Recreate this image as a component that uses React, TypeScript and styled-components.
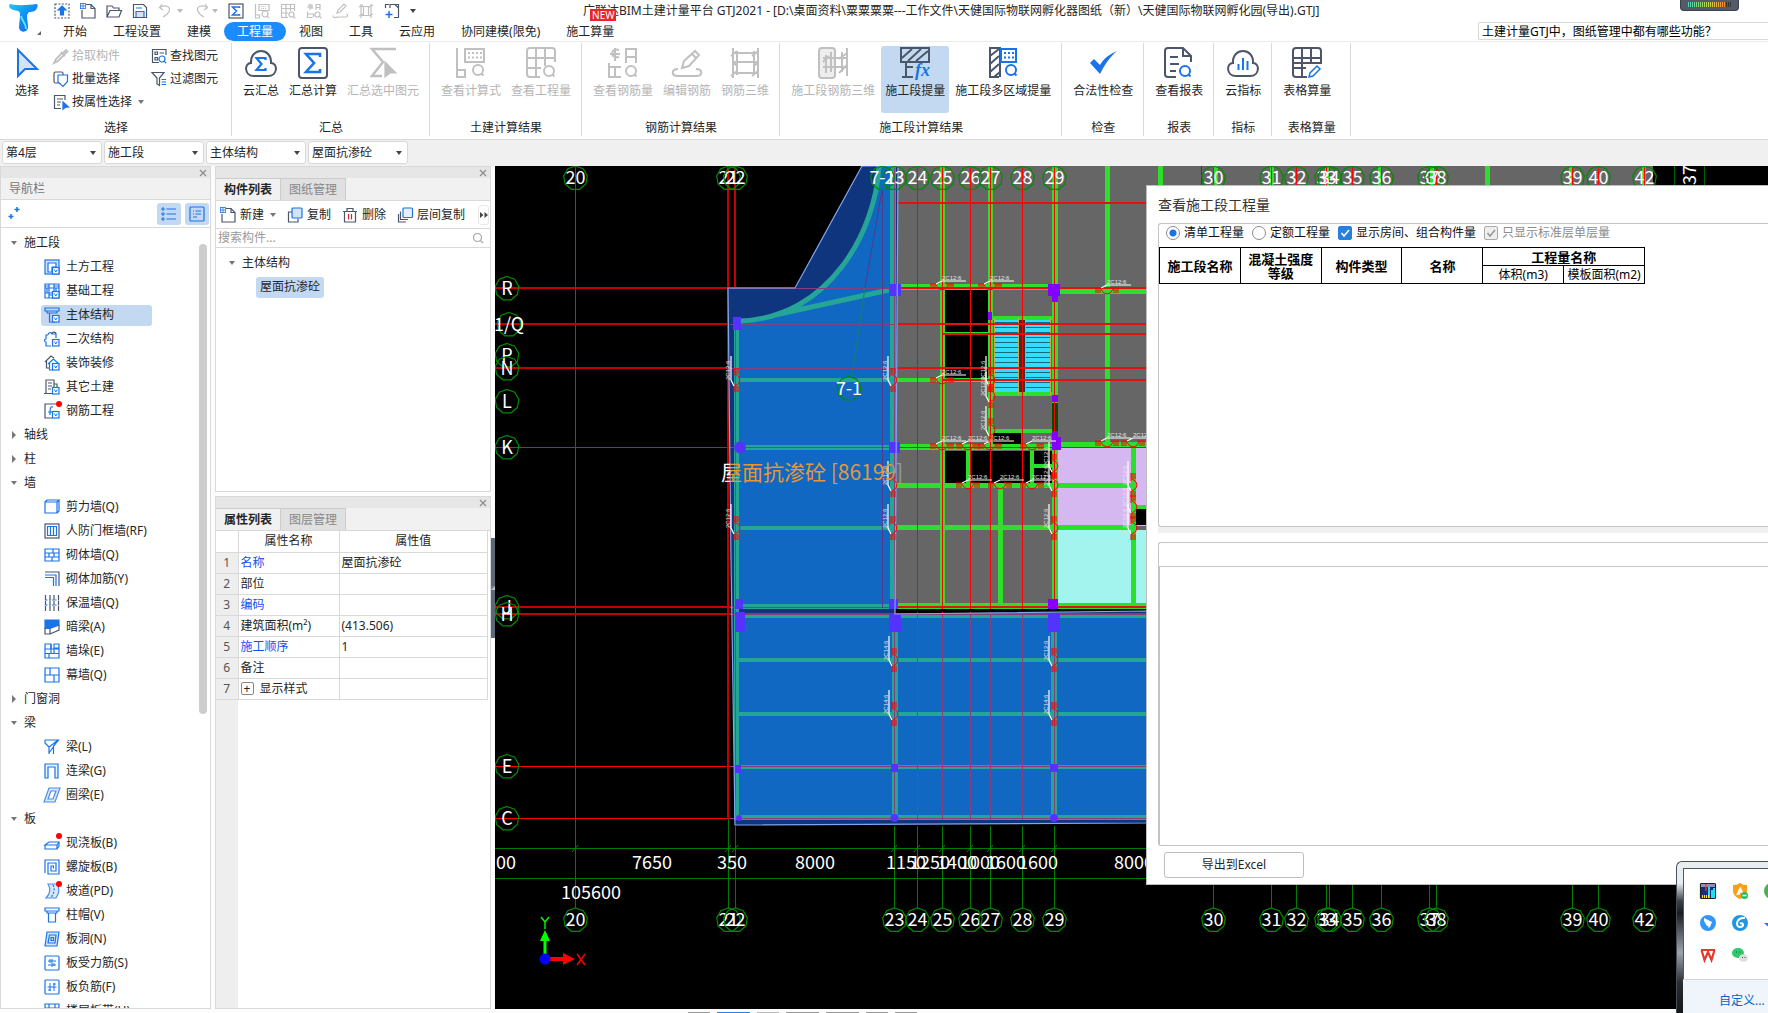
import React from 'react';
import styled, { createGlobalStyle } from 'styled-components';

const BLUE = '#1a73e8';
const DARK = '#4c566a';
const GRAY = '#c0c0c0';
const PALE = '#d3e4f9';
const SELECTED = '#c3d9f1';
const LINE = '#d9d9d9';

const GlobalStyle = createGlobalStyle`
  * { box-sizing: border-box; }
  body { margin: 0; background: #fcfcfc; overflow: hidden; }
  body, button, input, select, table {
    font-family: "Noto Sans", "Noto Sans CJK SC", sans-serif;
    font-size: 12px;
    line-height: 16px;
    color: #262626;
  }
  button { border: 0; padding: 0; background: none; white-space: nowrap; }
  ul { list-style: none; margin: 0; padding: 0; }
`;

/* ---------- icons ---------- */

const Svg = styled.svg<{ $size?: number }>`
  width: ${p => p.$size ?? 16}px;
  height: ${p => p.$size ?? 16}px;
  flex: none;
  fill: none;
  stroke: ${BLUE};
  stroke-width: 1.2;
  overflow: visible;
`;

type Art = Record<string, React.ReactNode>;

const Lens = ({ x, y, c, r = 3 }: { x: number; y: number; c: string; r?: number }) => (
  <g stroke={c}><circle cx={x} cy={y} r={r} fill="#fff" /><path d={`M${x + r * 0.7} ${y + r * 0.7}l2 2`} /></g>
);

const smallArt: Art = {
  upload: <><rect x="1" y="1" width="14" height="14" stroke={DARK} strokeDasharray="2 1.4" /><path d="M8 3l4 4H9.500v5h-3V7H4z" fill={BLUE} /></>,
  newFile: <><path d="M6 1.500h5l4 4v9.500H2V7M11 1.500v4h4" stroke={DARK} /><path d="M0 .5h5M0 3h5M0 5.500h5M.5 0v6M3 0v6M5.500 0v6" strokeWidth=".8" /></>,
  open: <><path d="M1 14V3h5l1.500 2H13v3M1 14L4 7.500h11.500L13 14z" stroke={DARK} /></>,
  save: <><path d="M1.500 1.500h10l3 3v10h-13z" stroke={DARK} /><path d="M4 5h6M4 14V8.500h8V14" fill={PALE} /></>,
  undo: <path d="M4 1L1.500 4.500 5 7M1.500 4.500C8 1 13 4 11 8.500 10 11 7 13 5 14" stroke={GRAY} />,
  redo: <path d="M12 1l2.500 3.500L11 7M14.500 4.500C8 1 3 4 5 8.500 6 11 9 13 11 14" stroke={GRAY} />,
  sigma: <><rect x="1" y="1" width="14" height="14" stroke={DARK} /><path d="M11.500 5V4h-7l4 4-4 4h7v-1" strokeWidth="1.500" /></>,
  viewCalc: <g stroke={GRAY}><path d="M1.500 1v14h4v-3h-4M5 1.500h10v6H5z" /><path d="M7 3.500h6M7 5.500h6" strokeDasharray="1 1" /><Lens x={11} y={11} c={GRAY} /></g>,
  viewQty: <g stroke={GRAY}><path d="M8 14.500H1.500v-13h13V8M1.500 5.500h13M1.500 10H8M6 1.500v13M10.500 1.500V8" /><Lens x={11.500} y={11.500} c={GRAY} r={2.500} /></g>,
  viewBar: <g stroke={GRAY}><path d="M4 1v6M1 4h6M2 2h4v4M10 7V1.500h4V7M10 4.500h4M1.500 8.500v6h5M1.500 11h6v3" /><Lens x={11.500} y={11.500} c={GRAY} r={2.500} /></g>,
  editBar: <g stroke={GRAY}><path d="M5 10l1-3 6-6 2 2-6 6zM1 12.500c0 3 3 2 5 1.500h8c2 0 2-3 0-3" /></g>,
  bar3d: <g stroke={GRAY}><path d="M3 1v14M13 1v14M3 3.500h10M3 12.500h10M1 4l4-2M1 13l4-2M11 4l4-2M11 13l4-2M5.500 3v10M10.500 3v10" /></g>,
  addSel: <><path d="M5 1.500H1.500V5M10 1.500h4.500v13H10M6 5V1.500h5l3.500 3.500" stroke={DARK} /><path d="M5 8v7M1.500 11.500h7" strokeWidth="1.500" /></>,
  pick: <><path d="M1 15l2-4 6-6 2 2-6 6zM8 4l4 4M9.500 5.500L13 2l1.500 1.500-3.500 3.500" stroke={GRAY} strokeWidth="1.800" /></>,
  batch: <><rect x="1" y="1" width="9" height="11" rx="1.500" stroke={DARK} /><path d="M5 4h9.500v6.500L10 15.500 5 11z" fill="#fff" /></>,
  byAttr: <><path d="M12 6V1.500H1.500v13H8M4 5h6M4 8h4M4 11h3" stroke={DARK} /><path d="M10 8l5.500 5-3 .2-2.500 2z" fill={BLUE} /></>,
  find: <><path d="M15 7V1.500H1.500v13H8M8.500 5H13" stroke={DARK} /><path d="M4 4h2.500v2.500H4zM4 9.500h2.500V12H4z" stroke={DARK} /><Lens x={11} y={11} c={BLUE} /></>,
  filter: <><path d="M1 1.500h12L8.500 7v7.500L6 13V7z" stroke={DARK} /><path d="M10.500 8.500H15M10.500 11H15M10.500 13.500H15" /></>,
  copy: <><path d="M5 5H1.500v10H11v-3.500" stroke={DARK} /><rect x="5" y="1" width="10" height="10" rx="1" fill={PALE} /></>,
  remove: <><path d="M2.500 4.500V15h11V4.500M1 4.500h14M5 4.500V1.500h6v3" stroke={DARK} /><path d="M6.500 7v5.500M9.500 7v5.500" stroke="#e02020" /></>,
  layerCopy: <><path d="M1.500 7v8H9M3.500 4.500v8H11" stroke={DARK} /><rect x="6" y="1" width="9.500" height="9.500" rx="1" fill="#e6f0fc" /></>,
  list: <><path d="M5.500 3H15M5.500 8H15M5.500 13H15" /><path d="M1 2h2v2H1zM1 7h2v2H1zM1 12h2v2H1z" strokeWidth="1" /></>,
  card: <><rect x="1" y="1" width="14" height="14" rx="1" /><path d="M4 5h1M6.500 5H12M4 8h1M6.500 8H12M4 11h4" /></>,
  plus: <><path d="M9 1v5M6.500 3.500h5M3 8v5M.5 10.500h5" strokeWidth="1.500" /></>,
};

const tagM = <><rect x="8.500" y="8.500" width="6.500" height="6.500" fill="#fff" stroke={BLUE} /><path d="M10.300 10.500l1.500 2.500 1.500-2.500" strokeWidth="1" /></>;
const redDot = <circle cx="15" cy="1" r="3" fill="#f00" stroke="none" />;

const navArt: Art = {
  earth: <><rect x="1" y="1" width="14" height="14" fill={PALE} /><path d="M4 4h8v4H8v5H4z" fill="#fff" />{tagM}</>,
  base: <><path d="M1 1h14v14H1zM1 5h14M1 10h14M5 1v14M10 1v14M1 3h4M10 3h5M3 5v5M12 5v5M5 12h5" />{tagM}</>,
  main: <><path d="M1 1h14v3H1zM3 4v2h2.500v9H11M5.500 6H13V4" />{tagM}</>,
  second: <><path d="M4 4c0-3 4-3 4-1h4v4M4 4H2v4c-2 0-2 3 0 3v4h5" /><path d="M8 3c0-3 4-2 4 0" stroke={DARK} />{tagM}</>,
  decor: <><path d="M1 7l6-6 3 2M2.500 6v7H5" stroke={DARK} /><path d="M4 9l5.500-5L15 9M5.500 8v7H9" />{tagM}</>,
  other: <><path d="M2 14V1h8v7M0 14.500h8M10 5h3v3M4 4h4M4 7h4M4 10h3" stroke={DARK} />{tagM}</>,
  rebar: <><path d="M12 1H1v14h7" stroke={DARK} /><path d="M9 4c-3-1-3 2-3 8M4 9h5" />{tagM}{redDot}</>,
  shear: <><path d="M1 3h12v11H1zM1 3l2-2h12l-2 2M15 1v11l-2 2" /></>,
  door: <><rect x="1" y="1" width="14" height="14" stroke={DARK} /><path d="M3.500 3.500h9v9h-9zM6.500 3.500v9M9.500 3.500v9" /></>,
  brick: <path d="M1 2h14v12H1zM1 6h14M1 10h14M9 2v4M5 6v4M10 6v4M8 10v4" />,
  brickbar: <><path d="M1 1h14v14" stroke={DARK} /><path d="M1 4h11v11M1 6.500h8.500V15" /></>,
  insul: <><path d="M1.500 0v16M6 0v16M10 0v16M14.500 0v16" stroke={DARK} strokeDasharray="5 .5" /><path d="M2 5h12M2 10h12" strokeDasharray="1.500 1.500" /></>,
  hidden: <><path d="M1 1h14v5L6 9.500H1z" fill={BLUE} /><path d="M1 9v6h5V9.500M6 15l9-4V6" stroke={DARK} /></>,
  pier: <><path d="M1 1h6v5H1zM10 1h5v4h-5zM1 6h14v9H1zM1 10.500h14M5 10.500V15M10 6v4.500" /><path d="M7 1v9" /></>,
  curtain: <path d="M1 1h14v14H1zM1 8h14M6 1v7M10 8v7" />,
  beam: <path d="M1 1h13.500L9.500 7v8M1 1v3l4 4v7M5 8l4-3 5-4M5 14l5-7" />,
  link: <path d="M1 15V1h13v14h-3V4H4v11z" fill="#eaf2fd" />,
  ring: <path d="M5 1h11l-5 14H0zM7 4h5l-3 8H4z" fill="#d9e7fa" fillRule="evenodd" stroke="#4c8ee6" />,
  slab: <><path d="M1 10l4-3h10l-2 3zM1 10v4h12v-4M13 14l2-3V7" />{redDot}</>,
  spiral: <path d="M1 14V1h14v14H4V4h8v8H7V7h2.500v2.500" />,
  ramp: <><path d="M4 1h9c4 6 1 11-1 14H2C7 10 7 6 4 1z" fill="#d9e7fa" stroke="#4c8ee6" /><path d="M9 2c2 4 1 9-2 12" strokeDasharray="2 1.500" />{redDot}</>,
  cap: <path d="M1 1h14v3H1zM3 4v2h10V4M4.500 6v9h7V6" />,
  hole: <><path d="M3 1h12l-2 14H1z" fill={PALE} /><path d="M5.500 4h6.500l-1 8H4zM7 6.500h2.500v3H7z" /></>,
  force: <><rect x="1" y="1" width="14" height="14" rx="1" /><path d="M4 6h8M4 10h8M8 4v8M6 4v4M10 8v3" strokeWidth="1" /></>,
  neg: <><rect x="1" y="1" width="14" height="14" rx="1" /><path d="M3.500 8h9M6 4v8M10 4v8M4 11h3M9 5h3" strokeWidth="1" /></>,
  strip: <path d="M1 1h14v14H1zM5 1v14M11 1v14M1 5h14" />,
};

const hatch = 'M3 11L13 2M9 14L22 2M17 14L29 4';

const bigArt: Art = {
  cursor: <path d="M7 3v26l7-7h12z" fill={PALE} strokeWidth="2" />,
  cloudSum: <><path d="M9 29C-1 29-1 16 6 16 5 0 27 0 26 16c7 0 7 13-3 13z" stroke={DARK} strokeWidth="2" /><path d="M20.500 13v-2h-9l5 6-5 6h9v-2" strokeWidth="2.200" /></>,
  sum: <><rect x="2" y="1" width="28" height="30" rx="3" stroke={DARK} strokeWidth="2" /><path d="M23 10V7H9l8 9-8 9h14v-3" strokeWidth="2.600" /></>,
  sumSel: <g stroke={GRAY}><path d="M29 2H5l11 13L5 29h10" strokeWidth="2.500" /><path d="M18 15l11 11h-6l-5 4z" fill={GRAY} /></g>,
  calc: <g stroke={GRAY} strokeWidth="2"><path d="M2 1v29h8v-7H2M10 2h19v13H10z" /><path d="M13 6h14M13 10.500h14" strokeDasharray="2 2" /><Lens x={23} y={23} c={GRAY} r={5} /></g>,
  qty: <g stroke={GRAY} strokeWidth="2"><path d="M15 30H5q-3 0-3-3V4q0-3 3-3h22q3 0 3 3v11M2 11h28M2 21h14M11 1v29M20 1v18" /><Lens x={24} y={24} c={GRAY} r={5} /></g>,
  barQty: <g stroke={GRAY} strokeWidth="2"><path d="M12 3C3 0 3 12 12 10M8 1v13M3 7h10M19 16V2h10v14M19 10h10M2 16v14h12M2 20h12M8 20v10" /><Lens x={24} y={24} c={GRAY} r={5} /></g>,
  barEdit: <g stroke={GRAY} strokeWidth="2"><path d="M11 21l2-7L24 4l4 4-10 11zM21 7l4 4M7 22c-7 0-7 7 0 7h18c7 0 7-7 0-7" /></g>,
  bar3d: <g stroke={GRAY} strokeWidth="2"><path d="M4 1v30M29 1v30M4 6h25M4 15h25M4 26h25M8 4v24M25 4v24M2 9l6-5M2 29l6-5M23 9l6-5M23 29l6-5M4 15l4 4M25 19l4-4" /></g>,
  stage3d: <g stroke={GRAY} strokeWidth="2"><rect x="2" y="1" width="16" height="30" rx="3" fill="#eee" /><path d="M9 8v18M30 1v28M6 11h24M6 20h24M14 5v20M25 5v20M6 15l6-6M22 26l8-8M22 12l8-6" /></g>,
  stage: <><path d="M2 1h28v14H2z" stroke={DARK} strokeWidth="2" /><path d={hatch} stroke={DARK} strokeWidth="2" /><path d="M7 15v15M3 30h11M7 20h7" stroke={DARK} strokeWidth="2" /><text x="16" y="29" fontSize="18" fontStyle="italic" fontWeight="bold" fontFamily="Liberation Serif, serif" fill={BLUE} stroke="none">fx</text></>,
  stageMulti: <><path d="M12 30H3V1h10v29M3 9l9-7M3 17l9-8M3 25l9-8M7 30l6-5" stroke={DARK} strokeWidth="2" /><path d="M14 2h15v13H14z" fill="#fff" strokeWidth="2" /><path d="M17 6h11M17 10.500h11" strokeWidth="2" strokeDasharray="2 2" /><g strokeWidth="2"><Lens x={24} y={23} c={BLUE} r={5} /></g></>,
  check: <path d="M3 16l4-4 6 6C17 11 23 7 30 4 23 10 18 17 13 27z" fill={BLUE} stroke="none" />,
  report: <><path d="M13 30H5q-3 0-3-3V4q0-3 3-3h15l8 8v6M20 1v8h8M7 10h8M7 17h9M7 24h6" stroke={DARK} strokeWidth="2" /><g strokeWidth="2"><Lens x={22} y={24} c={BLUE} r={5} /></g></>,
  cloudBar: <><path d="M9 29C-1 29-1 16 6 16 5 0 27 0 26 16c7 0 7 13-3 13z" stroke={DARK} strokeWidth="2" /><path d="M11.500 17v6M16 11v12M20.500 14v9" strokeWidth="2" /></>,
  tableCalc: <><path d="M16 30H5q-3 0-3-3V4q0-3 3-3h22q3 0 3 3v12H2M2 11h28M2 21h13M11 1v29M20 1v15" stroke={DARK} strokeWidth="2" /><path d="M18 30l1-4 7-7 3 3-7 7z" strokeWidth="1.500" fill="#fff" /></>,
};

const Caret = styled.i<{ $dir?: 'down' | 'right'; $c?: string }>`
  flex: none;
  width: 0;
  height: 0;
  border: 3px solid transparent;
  ${p => (p.$dir === 'right'
    ? `border-left: 4px solid ${p.$c ?? '#777'}; border-top-width: 4px; border-bottom-width: 4px; border-right: 0; margin: 0 1px;`
    : `border-top: 4px solid ${p.$c ?? '#777'}; border-bottom: 0;`)}
`;

/* ---------- header ---------- */

const Shell = styled.div`
  position: relative;
  display: flex;
  flex-direction: column;
  height: 100vh;
  overflow: hidden;
  background: #fcfcfc;
`;
const Header = styled.header`
  display: grid;
  grid-template-columns: 50px 1fr;
  background: #fff;
`;
const LogoButton = styled.button`
  display: flex;
  align-items: flex-start;
  padding: 4px 0 0 9px;
  ${Svg} { width: 32px; height: 32px; }
`;
const TitleRow = styled.div`
  display: flex;
  align-items: center;
  height: 22px;
  padding-left: 4px;
`;
const QuickBar = styled.div`
  display: flex;
  align-items: center;
  gap: 10px;
  width: 529px;
  button { display: flex; align-items: center; gap: 3px; }
`;
const Title = styled.h1`
  margin: 0;
  font-size: 12px;
  line-height: 16px;
  font-weight: 400;
  white-space: nowrap;
`;
const TabRow = styled.nav`
  display: flex;
  height: 19px;
`;
const Tab = styled.button<{ $active?: boolean }>`
  position: relative;
  padding: 0 13px;
  line-height: 19px;
  border-radius: 10px;
  color: ${p => (p.$active ? '#fff' : '#262626')};
  background: ${p => (p.$active ? '#1b8cff' : 'transparent')};
`;
const NewBadge = styled.span`
  position: absolute;
  top: -13px;
  right: 11px;
  width: 26px;
  background: #e8262a;
  color: #fff;
  font-size: 10px;
  line-height: 12px;
  text-align: center;
`;
const HelpInput = styled.input`
  width: 290px;
  height: 18px;
  margin-left: auto;
  padding: 0 3px;
  border: 1px solid ${LINE};
  border-right: 0;
  border-radius: 2px 0 0 2px;
  color: #000;
  background: #fff;
`;
const Meter = styled.div`
  position: absolute;
  top: 0;
  right: 29px;
  width: 59px;
  height: 11px;
  padding: 2px 7px 4px;
  border-radius: 0 0 4px 4px;
  background: #555a68;
  border: 1px solid #3c404b;
  border-top: 0;
  &::before {
    content: "";
    display: block;
    height: 5px;
    background: repeating-linear-gradient(90deg, transparent 0 1px, #555a68 1px 2px), linear-gradient(90deg, #3fd8b4, #c8d84a 50%, #f08a3c 85%, #333 86%);
  }
`;

const Ribbon = styled.div`
  display: flex;
  height: 99px;
  background: #fff;
  border-top: 1px solid #ececec;
  border-bottom: 1px solid ${LINE};
`;
const Group = styled.section<{ $width?: number }>`
  display: flex;
  flex-direction: column;
  flex: none;
  width: ${p => (p.$width ? `${p.$width}px` : 'auto')};
  margin: 1px 0 3px;
  padding: 1px 6px 0 7px;
  border-right: 1px solid ${LINE};
`;
const GroupBody = styled.div`
  display: flex;
  flex: 1;
  gap: 2px;
`;
const GroupLabel = styled.h2`
  margin: 0;
  font-size: 12px;
  line-height: 16px;
  font-weight: 400;
  text-align: center;
`;
const BigButton = styled.button<{ $on?: boolean }>`
  display: flex;
  flex-direction: column;
  align-items: center;
  gap: 4px;
  height: 67px;
  margin-top: 2px;
  padding: 1px 4px;
  border-radius: 3px;
  color: #262626;
  background: ${p => (p.$on ? SELECTED : 'transparent')};
  &:disabled { color: #b5b5b5; }
`;
const SmallGrid = styled.div`
  display: grid;
  grid-template-columns: 98px auto;
  grid-auto-rows: 23px;
  padding-left: 4px;
`;
const SmallButton = styled.button`
  display: flex;
  align-items: center;
  gap: 3px;
  color: #262626;
  &:disabled { color: #b5b5b5; }
  ${Caret} { margin-left: 3px; }
`;

const SelectRow = styled.div`
  display: flex;
  gap: 2px;
  height: 26px;
  padding: 1px 2px;
  background: #f0f0f0;
`;
const SelectBox = styled.label`
  position: relative;
  display: flex;
  width: 100px;
  height: 23px;
  select {
    appearance: none;
    width: 100%;
    padding: 0 3px;
    border: 1px solid ${LINE};
    border-radius: 3px;
    background: #fff;
  }
  ${Caret} { position: absolute; right: 6px; top: 10px; }
`;

/* ---------- docked panels ---------- */

const Main = styled.main`
  display: flex;
  flex: 1;
  min-height: 0;
`;
const Column = styled.div<{ $width: number }>`
  display: flex;
  flex-direction: column;
  gap: 4px;
  flex: none;
  width: ${p => p.$width}px;
  margin-right: 4px;
`;
const Panel = styled.section<{ $height?: number }>`
  display: flex;
  flex-direction: column;
  flex: ${p => (p.$height ? `0 0 ${p.$height}px` : '1 1 0')};
  min-height: 0;
  overflow: hidden;
  background: #fff;
  border: 1px solid ${LINE};
`;
const Grip = styled.div`
  display: flex;
  justify-content: flex-end;
  align-items: center;
  flex: none;
  height: 11px;
  padding-right: 3px;
  background: #e6e6e6;
  ${Svg} { stroke: #8c8c8c; display: block; }
`;
const PanelTitle = styled.div`
  flex: none;
  height: 22px;
  padding-left: 8px;
  line-height: 21px;
  color: #777;
  background: #f1f1f1;
  border-bottom: 1px solid ${LINE};
`;
const PanelTabs = styled.div`
  display: flex;
  flex: none;
  height: 23px;
  background: #f1f1f1;
  border-bottom: 1px solid ${LINE};
`;
const PanelTab = styled.button<{ $active?: boolean }>`
  width: 65px;
  border: 1px solid #ccc;
  border-width: 1px 1px 0 0;
  font-weight: ${p => (p.$active ? 700 : 400)};
  color: ${p => (p.$active ? '#262626' : '#888')};
  background: ${p => (p.$active ? '#f1f1f1' : '#e0e0e0')};
`;
const NavTools = styled.div`
  display: flex;
  align-items: center;
  gap: 4px;
  flex: none;
  height: 28px;
  padding: 0 1px 0 7px;
  border-bottom: 1px solid ${LINE};
  button { display: flex; }
`;
const ToggleButton = styled.button`
  justify-content: center;
  align-items: center;
  width: 24px;
  height: 22px;
  border-radius: 3px;
  background: ${SELECTED};
`;
const Spacer = styled.span`flex: 1;`;

const TreeArea = styled.div`
  position: relative;
  flex: 1;
  min-height: 0;
  overflow: hidden;
  padding-top: 3px;
`;
const ScrollThumb = styled.div`
  position: absolute;
  top: 16px;
  right: 3px;
  width: 8px;
  height: 470px;
  border-radius: 4px;
  background: #cdcdcd;
`;
const TreeItem = styled.li`
  display: flex;
  align-items: center;
  height: 24px;
`;
const Branch = styled.button<{ $indent?: number }>`
  display: flex;
  align-items: center;
  gap: 7px;
  margin-left: ${p => p.$indent ?? 10}px;
`;
const Leaf = styled.button<{ $on?: boolean }>`
  display: flex;
  align-items: center;
  gap: 6px;
  width: 111px;
  height: 21px;
  margin-left: 40px;
  padding-left: 3px;
  border-radius: 3px;
  background: ${p => (p.$on ? SELECTED : 'transparent')};
`;

const ToolRow = styled.div`
  display: flex;
  align-items: center;
  gap: 11px;
  flex: none;
  height: 28px;
  padding: 0 1px 0 4px;
  border-bottom: 1px solid ${LINE};
`;
const ToolButton = styled.button`
  display: flex;
  align-items: center;
  gap: 4px;
  ${Caret} { margin-left: 2px; }
`;
const MoreButton = styled.button`
  display: flex;
  align-items: center;
  justify-content: center;
  flex: none;
  width: 11px;
  height: 20px;
  margin-left: auto;
  border: 1px solid #e8e8e8;
  border-radius: 3px;
`;
const SearchRow = styled.label`
  display: flex;
  align-items: center;
  flex: none;
  height: 19px;
  padding: 0 7px 0 2px;
  border-bottom: 1px solid ${LINE};
  input { flex: 1; min-width: 0; border: 0; padding: 0; outline: 0; background: none; }
  input::placeholder { color: #999; }
  ${Svg} { stroke: #aaa; }
`;
const Chip = styled.button`
  height: 21px;
  margin-left: 40px;
  padding: 0 4px;
  border-radius: 3px;
  background: ${SELECTED};
`;

const PropArea = styled.div`
  flex: 1;
  background: linear-gradient(90deg, #eee 22px, #fff 22px);
`;
const PropTable = styled.table`
  width: calc(100% - 2px);
  table-layout: fixed;
  border-collapse: collapse;
  th, td { height: 21px; padding: 0 2px; border: 1px solid ${LINE}; font-weight: 400; text-align: left; line-height: 16px; }
  thead th { text-align: center; background: #fff; border-top: 0; }
  tr > :first-child { border-left: 0; text-align: center; color: #555; }
  tbody td { background: #fff; }
`;
const PropName = styled.span<{ $link?: boolean }>`
  color: ${p => (p.$link ? '#1450f5' : '#262626')};
`;
const Expand = styled.button`
  width: 13px;
  height: 13px;
  margin: 0 6px 0 0;
  border: 1px solid #888;
  border-radius: 2px;
  line-height: 11px;
  font-size: 12px;
`;

const Splitter = styled.div`
  display: flex;
  align-items: center;
  flex: none;
  width: 4px;
  margin-left: -4px;
  height: 100px;
  margin-top: 372px;
  background: #5b6875;
  ${Caret} { border-left: 0; border-right: 4px solid #b8c0c8; border-top-width: 4px; border-bottom-width: 4px; margin: 0; }
`;

/* ---------- viewport ---------- */

const Viewport = styled.div`
  position: relative;
  flex: 1;
  min-width: 0;
  overflow: hidden;
  background: #000;
`;
const Drawing = styled.svg`
  display: block;
  width: 1273px;
  height: 843px;
  font-family: "Noto Sans CJK SC", sans-serif;
`;

const octagon = (cx: number, cy: number) =>
  Array.from({ length: 9 }, (_, i) => {
    const a = (i / 9) * Math.PI * 2 - Math.PI / 2;
    return `${(cx + Math.cos(a) * 12).toFixed(1)},${(cy + Math.sin(a) * 12).toFixed(1)}`;
  }).join(' ');

const Bubble = ({ x, y, t }: { x: number; y: number; t: string }) => (
  <g>
    <polygon points={octagon(x, y)} fill="none" stroke="#008c00" strokeWidth="1.2" />
    <text x={x} y={y + 6} fontSize="18" fill="#fff" textAnchor="middle">{t}</text>
  </g>
);

const Rebar = ({ x, y, v, t = '2C12;6' }: { x: number; y: number; v?: boolean; t?: string }) => (
  <g transform={`translate(${x} ${y})${v ? ' rotate(-90)' : ''}`} fill="none">
    <path d="M-12-2h8M4-2h8M-11-2v5M-9-2v5M-7-2v5M11-2v5M9-2v5M7-2v5M-6-1Q-4 4 0 4T6-1" stroke="#f00" />
    <path d="M-6-2L0-5H24" stroke="#fff" strokeWidth="1.200" />
    <text x="0" y="-6.500" fontSize="6" fill="#e8e8e8" fontFamily="Liberation Sans, sans-serif">{t}</text>
  </g>
);

type Seg = [number, number, number, number, number];
const Lines = ({ d, c }: { d: Seg[]; c: string }) => (
  <g stroke={c} shapeRendering="crispEdges">
    {d.map(([x1, y1, x2, y2, w], i) => <line key={i} x1={x1} y1={y1} x2={x2} y2={y2} strokeWidth={w} />)}
  </g>
);
type Box = [number, number, number, number];
const Boxes = ({ d, c }: { d: Box[]; c: string }) => (
  <g fill={c} shapeRendering="crispEdges">
    {d.map(([x, y, w, h], i) => <rect key={i} x={x} y={y} width={w} height={h} />)}
  </g>
);

const axes: [number, string][] = [
  [575, '20'], [728, '21'], [735, '22'], [894, '23'], [917, '24'], [942, '25'], [970, '26'], [990, '27'], [1022, '28'], [1054, '29'],
  [1213, '30'], [1271, '31'], [1296, '32'], [1326, '33'], [1329, '34'], [1352, '35'], [1381, '36'], [1429, '37'], [1436, '38'],
  [1572, '39'], [1598, '40'], [1644, '42'],
];
const rows: [number, string, number][] = [
  [288, 'R', 2], [324, '1/Q', 2], [355, 'P', 0], [368, 'N', 2], [401, 'L', 0], [447, 'K', 1],
  [607, 'J', 2], [614, 'H', 2], [766, 'E', 1], [818, 'C', 1],
];
const dims: [number, number, string][] = [
  [506, 863, '00'], [652, 863, '7650'], [732, 863, '350'], [815, 863, '8000'], [906, 863, '1150'], [930, 863, '1250'],
  [957, 863, '1400'], [980, 863, '1000'], [1006, 863, '1600'], [1038, 863, '1600'], [1134, 863, '8000'], [591, 893, '105600'],
];

const steps = Array.from({ length: 15 }, (_, i) => 322 + i * 5);
const outline = '728,288 795,288 862,166 898,166 896,480 895,614 1148,611 1148,823 735,825 731,560';

const Plan = () => (
  <Drawing viewBox="495 166 1273 843" role="img" aria-label="施工段平面图">
    <defs>
      <linearGradient id="label" gradientUnits="userSpaceOnUse" x1="721" x2="904" y1="0" y2="0">
        <stop offset="0.05" stopColor="#fff" /><stop offset="0.05" stopColor="#e8963a" />
        <stop offset="0.93" stopColor="#e8963a" /><stop offset="0.93" stopColor="#9a9a9a" />
      </linearGradient>
    </defs>
    <Boxes c="#666" d={[[896, 166, 757, 442]]} />
    <Boxes c="#d5b8f0" d={[[1058, 448, 90, 78]]} />
    <Boxes c="#a3f3ee" d={[[1058, 530, 90, 75]]} />
    <Boxes c="#000" d={[[944, 290, 44, 42], [944, 335, 44, 43], [992, 433, 29, 11], [944, 451, 22, 32], [971, 451, 59, 32], [1034, 451, 18, 13], [1034, 468, 18, 15], [1136, 509, 12, 16]]} />
    <Lines c="#2bdf2b" d={[
      [942.5, 166, 942.5, 605, 5], [990.5, 166, 990.5, 447, 5], [1055, 166, 1055, 605, 6], [1107.5, 166, 1107.5, 445, 5],
      [1160.5, 166, 1160.5, 186, 5], [1215.5, 166, 1215.5, 186, 5], [1272, 166, 1272, 186, 4], [1327, 166, 1327, 186, 4],
      [1380, 166, 1380, 186, 4], [1432, 166, 1432, 186, 4], [1487.5, 166, 1487.5, 186, 5], [1571, 166, 1571, 186, 4], [1644, 166, 1644, 186, 4],
      [898, 287, 1050, 287, 6], [1058, 291.5, 1148, 291.5, 5], [942, 333.5, 990, 333.5, 3], [897, 380, 990, 380, 4],
      [990, 318, 1053, 318, 4], [990, 394, 1053, 394, 4], [990, 431, 1053, 431, 4], [897, 447, 1053, 447, 6], [1058, 444.5, 1148, 444.5, 5],
      [897, 485.5, 1134, 485.5, 5], [897, 527.5, 1134, 527.5, 5], [897, 606, 1148, 606, 6], [1000.5, 485, 1000.5, 605, 5],
      [1133.5, 447, 1133.5, 605, 5], [968, 450, 968, 485, 4], [1032, 450, 1032, 485, 4], [1034, 466, 1053, 466, 4], [1136, 507, 1148, 507, 4],
    ]} />
    <Boxes c="#004d00" d={[[1052, 403, 6, 28]]} />
    <Boxes c="#33ddff" d={[[994, 320, 25, 72], [1025, 320, 26, 72]]} />
    <Lines c="#0d6c80" d={steps.map(y => [994, y + 0.5, 1051, y + 0.5, 1] as Seg).filter(s => s[1] < 392)} />
    <Boxes c="#333" d={[[1019, 320, 6, 72]]} />
    <Lines c="#d9a04a" d={[[994.5, 318, 994.5, 395, 1], [1018.5, 318, 1018.5, 395, 1], [1025.5, 318, 1025.5, 395, 1], [1050.5, 318, 1050.5, 395, 1]]} />
    <Lines c="#e01212" d={[
      [895, 203, 1148, 203, 2], [942, 334, 1148, 334, 2], [942, 380, 1148, 380, 2],
      ...rows.filter(r => r[2] === 2).map(([y]) => [895, y, 1148, y, 2] as Seg),
    ]} />
    <Lines c="#f00" d={[
      ...axes.filter(a => a[0] > 900).map(([x]) => [x + 0.5, 167, x + 0.5, 614, 1] as Seg),
      [575.5, 167, 575.5, 819, 1],
      ...rows.filter(r => r[2] === 1).map(([y]) => [495, y + 0.5, 1148, y + 0.5, 1] as Seg),
    ]} />
    <Lines c="#c40000" d={[
      [728, 167, 728, 819, 2], [735, 167, 735, 819, 2], [1201.5, 166, 1201.5, 186, 1],
      ...rows.filter(r => r[2] === 2).map(([y]) => [495, y, 895, y, 2] as Seg),
    ]} />
    <Boxes c="#000" d={[[897, 609, 251, 3]]} />
    <Lines c="#006400" d={[[1674.5, 166, 1674.5, 186, 1], [1704.5, 166, 1704.5, 186, 1]]} />

    <polygon points={outline} fill="#10357f" />
    <path d="M879 166C876 230 830 318 740 321H735V608H895V166zM735 613H1148V820H735z" fill="#1068c2" />
    <path d="M879 166C876 230 830 318 740 321M775 315L889 290" fill="none" stroke="#25a595" strokeWidth="5" />
    <Lines c="#25a595" d={[
      [736.5, 321, 736.5, 820, 5], [893, 166, 893, 606, 6], [894.5, 614, 894.5, 820, 6], [1054, 614, 1054, 820, 6],
      [739, 380, 891, 380, 4], [739, 447.5, 891, 447.5, 5], [739, 528, 891, 528, 4], [739, 606, 891, 606, 5],
      [739, 615.5, 1148, 615.5, 4], [739, 660, 1148, 660, 4], [739, 714, 1148, 714, 4], [739, 767, 1148, 767, 4], [739, 817.5, 1148, 817.5, 5],
    ]} />
    <Lines c="#86407e" d={[
      ...rows.filter(r => r[2]).map(([y]) => [730, y + 0.5, y > 610 ? 1148 : 895, y + 0.5, 1] as Seg),
      ...axes.filter(a => a[0] >= 894 && a[0] < 1060).map(([x]) => [x + 0.5, 614, x + 0.5, 820, 1] as Seg),
      [894.5, 166, 894.5, 614, 1], [735, 321, 735, 820, 1],
    ]} />
    <Lines c="#523a8c" d={[[882.5, 190, 882.5, 608, 1]]} />
    <path d="M882 190L865 288" stroke="#523a8c" />
    <path d="M865 288L852 375" stroke="#138070" />
    <Boxes c="#5533ff" d={[
      [733, 317, 8, 13], [735, 599, 8, 10], [735, 612, 10, 20], [734, 765, 7, 8], [889, 284, 12, 12], [889, 442, 11, 11], [889, 599, 9, 10],
      [889, 613, 12, 19], [1048, 613, 12, 19], [891, 764, 7, 8], [1050, 764, 8, 8],
    ]} />
    <Boxes c="#8400ff" d={[[1048, 284, 12, 12], [1052, 296, 6, 6], [988, 312, 4, 8], [1052, 395, 6, 7], [1052, 431, 6, 6], [1052, 437, 9, 13], [1048, 599, 10, 10]]} />
    <g fill="#5533ff"><circle cx="740" cy="447.500" r="6" /><circle cx="739" cy="818" r="3" /><circle cx="894.500" cy="818" r="4" /><circle cx="1054" cy="818" r="4" /></g>
    <polygon points={outline} fill="none" stroke="#7fa6f0" strokeWidth="1.200" />

    <Lines c="#007a00" d={[
      [495, 848.5, 1148, 848.5, 1], [495, 878.5, 1148, 878.5, 1],
      ...axes.map(([x]) => [x + 0.5, x > 730 ? 826 : 819, x + 0.5, 908, 1] as Seg),
    ]} />
    <g stroke="#008c00">{axes.filter(a => a[0] < 1100).map(([x]) => <path key={x} d={`M${x - 3} 852l6-7`} />)}</g>

    {[[942, 286], [990, 286], [1107, 290], [942, 380], [942, 446], [968, 446], [990, 446], [1032, 446], [1107, 443], [1133, 443], [968, 485], [1000, 485], [1032, 485]].map(([x, y]) => <Rebar key={`${x}-${y}`} x={x} y={y} />)}
    {[[736, 380], [736, 528], [893, 380], [893, 485], [893, 528], [991, 380], [991, 396], [991, 430], [1054, 466], [1054, 485], [1054, 528], [1133, 485], [1133, 507], [1133, 528], [1054, 660]].map(([x, y]) => <Rebar key={`${x}-${y}`} x={x} y={y} v />)}
    <Rebar x={894} y={660} v t="2C14;6" />
    <Rebar x={894} y={714} v t="2C14;6" />
    <Rebar x={1054} y={714} v t="2C14;6" />

    {axes.map(([x, t]) => <g key={t}><Bubble x={x + 0.5} y={178} t={t} /><Bubble x={x + 0.5} y={920} t={t} /></g>)}
    <Bubble x={882.5} y={178} t="7-1" />
    <Bubble x={849} y={388.5} t="7-1" />
    {rows.map(([y, t]) => <Bubble key={t} x={t === '1/Q' ? 509 : 507} y={y + 0.5} t={t} />)}
    <text transform="translate(1696 185) rotate(-90)" fontSize="18" fill="#fff">37</text>
    <g fontSize="18" fill="#fff" textAnchor="middle">{dims.map(([x, y, t]) => <text key={x} x={x} y={y + 6}>{t}</text>)}</g>
    <text x="721" y="480" fontSize="21" fill="url(#label)">屋面抗渗砼 [86199]</text>

    <path d="M545 959V938" stroke="#0f0" strokeWidth="3" /><path d="M540 941l5-11 5 11z" fill="#0f0" />
    <path d="M545 959h20" stroke="#f00" strokeWidth="4" /><path d="M563 953l12 6-12 6z" fill="#f00" />
    <circle cx="545" cy="959" r="5.500" fill="#00f" />
    <path d="M541 917l4 5 4-5M545 922v7" fill="none" stroke="#0f0" strokeWidth="1.400" />
    <path d="M577 954l8 11M585 954l-8 11" stroke="#f00" strokeWidth="1.400" />
  </Drawing>
);

/* ---------- quantity window ---------- */

const Dialog = styled.section`
  position: absolute;
  left: 651px;
  top: 19px;
  right: 0;
  display: flex;
  flex-direction: column;
  padding: 0 0 6px 11px;
  background: #fff;
  border: 1px solid #bdbdbd;
  border-right: 0;
`;
const DialogTitle = styled.h2`
  margin: 0;
  font-size: 14px;
  line-height: 37px;
  font-weight: 400;
  color: #333;
`;
const Frame = styled.div`
  display: flex;
  flex-direction: column;
  height: 304px;
  border: 1px solid #c4c4c4;
  border-right: 0;
  border-radius: 3px 0 0 3px;
`;
const Options = styled.div`
  display: flex;
  gap: 8px;
  height: 18px;
  margin-bottom: 5px;
  padding-left: 7px;
`;
const Option = styled.label<{ $off?: boolean }>`
  display: flex;
  align-items: center;
  gap: 4px;
  color: ${p => (p.$off ? '#8c8c8c' : '#111')};
  input { appearance: none; width: 14px; height: 14px; margin: 0; border: 1px solid #8c8c8c; background: #fff; }
  input[type=radio] { border-radius: 50%; }
  input[type=radio]:checked { background: radial-gradient(circle, ${BLUE} 0 3px, #fff 4px); }
  input[type=checkbox] { border-radius: 2px; }
  input[type=checkbox]:checked {
    border-color: ${p => (p.$off ? '#aaa' : '#2680e0')};
    background: ${p => (p.$off ? '#eee' : '#2680e0')};
  }
`;
const CheckWrap = styled.span`
  position: relative;
  display: flex;
  ${Svg} { position: absolute; left: 2px; top: 2px; stroke-width: 1.6; pointer-events: none; }
`;
const QtyTable = styled.table`
  width: 486px;
  table-layout: fixed;
  border-collapse: collapse;
  color: #000;
  th { padding: 0; border: 1px solid #000; font-size: 13px; line-height: 14px; height: 18px; }
  tr + tr th { font-size: 12px; font-weight: 400; }
`;
const Sash = styled.div`
  height: 6px;
  margin-bottom: 9px;
  background: #f0f0f0;
`;
const Detail = styled.div`
  flex: 1;
  margin-top: 23px;
  border-top: 1px solid #c4c4c4;
  border-left: 1px solid #c4c4c4;
`;
const ExportButton = styled.button`
  width: 140px;
  height: 26px;
  margin: 6px 0 0 6px;
  border: 1px solid #bfbfbf;
  border-radius: 3px;
`;

/* ---------- tray and status ---------- */

const Tray = styled.aside`
  position: absolute;
  right: 0;
  bottom: 0;
  width: 92px;
  height: 152px;
  display: flex;
  flex-direction: column;
  padding: 6px 0 0 6px;
  overflow: hidden;
  border: 1px solid #4a4f55;
  border-width: 1px 0 0 1px;
  border-radius: 6px 0 0 0;
  background: linear-gradient(180deg, #e8edf2 0 14%, #3a3f47 26%, #1a1d22 34%, #9aa4ae 60%, #2a2d33 80%, #15171a);
`;
const TrayTop = styled.div`
  display: grid;
  grid-template-columns: repeat(3, 32px);
  grid-auto-rows: 32px;
  flex: 1;
  padding: 6px 0 0 8px;
  align-items: center;
  justify-items: center;
  background: #fff;
  border: 1px solid #555;
  border-width: 1px 0 0 1px;
  button { display: flex; }
`;
const TrayFoot = styled.div`
  height: 34px;
  padding: 13px 0 0 36px;
  background: #f0f4fb;
  border-top: 1px solid #c8d6ec;
  white-space: nowrap;
  a { color: #0066cc; text-decoration: none; }
`;
const Status = styled.footer`
  display: flex;
  align-items: flex-end;
  flex: none;
  gap: 7px;
  height: 4px;
  padding-left: 688px;
  background: #fcfcfc;
`;
const StatusBit = styled.i<{ $w: number; $c?: string }>`
  width: ${p => p.$w}px;
  height: 1px;
  background: ${p => p.$c ?? '#999'};
`;

/* ---------- data ---------- */

type BigItem = { t: string; i: string; off?: boolean; on?: boolean };
const groups: { label: string; items: BigItem[]; width?: number }[] = [
  { label: '汇总', items: [{ t: '云汇总', i: 'cloudSum' }, { t: '汇总计算', i: 'sum' }, { t: '汇总选中图元', i: 'sumSel', off: true }] },
  { label: '土建计算结果', items: [{ t: '查看计算式', i: 'calc', off: true }, { t: '查看工程量', i: 'qty', off: true }] },
  { label: '钢筋计算结果', items: [{ t: '查看钢筋量', i: 'barQty', off: true }, { t: '编辑钢筋', i: 'barEdit', off: true }, { t: '钢筋三维', i: 'bar3d', off: true }] },
  { label: '施工段计算结果', items: [{ t: '施工段钢筋三维', i: 'stage3d', off: true }, { t: '施工段提量', i: 'stage', on: true }, { t: '施工段多区域提量', i: 'stageMulti' }] },
  { label: '检查', items: [{ t: '合法性检查', i: 'check' }] },
  { label: '报表', items: [{ t: '查看报表', i: 'report' }] },
  { label: '指标', items: [{ t: '云指标', i: 'cloudBar' }] },
  { label: '表格算量', items: [{ t: '表格算量', i: 'tableCalc' }], width: 79 },
];

const smallItems = [
  { t: '拾取构件', i: 'pick', off: true }, { t: '查找图元', i: 'find' },
  { t: '批量选择', i: 'batch' }, { t: '过滤图元', i: 'filter' },
  { t: '按属性选择', i: 'byAttr', caret: true },
];

const tabs = ['开始', '工程设置', '建模', '工程量', '视图', '工具', '云应用', '协同建模(限免)', '施工算量'];
const quick = ['upload', 'newFile', 'open', 'save', 'undo', 'redo', 'sigma', 'viewCalc', 'viewQty', 'viewBar', 'editBar', 'bar3d', 'addSel'];

const tree: { t: string; open?: boolean; items?: [string, string][] }[] = [
  { t: '施工段', open: true, items: [['土方工程', 'earth'], ['基础工程', 'base'], ['主体结构', 'main'], ['二次结构', 'second'], ['装饰装修', 'decor'], ['其它土建', 'other'], ['钢筋工程', 'rebar']] },
  { t: '轴线' },
  { t: '柱' },
  { t: '墙', open: true, items: [['剪力墙(Q)', 'shear'], ['人防门框墙(RF)', 'door'], ['砌体墙(Q)', 'brick'], ['砌体加筋(Y)', 'brickbar'], ['保温墙(Q)', 'insul'], ['暗梁(A)', 'hidden'], ['墙垛(E)', 'pier'], ['幕墙(Q)', 'curtain']] },
  { t: '门窗洞' },
  { t: '梁', open: true, items: [['梁(L)', 'beam'], ['连梁(G)', 'link'], ['圈梁(E)', 'ring']] },
  { t: '板', open: true, items: [['现浇板(B)', 'slab'], ['螺旋板(B)', 'spiral'], ['坡道(PD)', 'ramp'], ['柱帽(V)', 'cap'], ['板洞(N)', 'hole'], ['板受力筋(S)', 'force'], ['板负筋(F)', 'neg'], ['楼层板带(H)', 'strip']] },
];

const props: [string, string, boolean][] = [
  ['名称', '屋面抗渗砼', true], ['部位', '', false], ['编码', '', true], ['建筑面积(m²)', '(413.506)', false],
  ['施工顺序', '1', true], ['备注', '', false], ['显示样式', '', false],
];

const trayArt: [string, React.ReactNode][] = [
  ['监视器', <><rect x=".5" y=".5" width="15" height="15" rx="1" fill="#1c2c7c" stroke="#222" /><path d="M1 1h14v3H1z" fill="#8b92b8" stroke="none" /><path d="M9 15V4M12 15V7M14 15V5" stroke="#1de0f0" strokeWidth="2" /><path d="M2 13.500h8" stroke="#f5e642" strokeWidth="3" strokeDasharray="1 1" /><path d="M6 1v7" stroke="#f33" /></>],
  ['安全卫士', <><path d="M1 2c4 0 5-1 7-2 2 1 3 2 7 2v6c0 4-4 7-7 8-3-1-7-4-7-8z" fill="#f9a01b" stroke="none" /><path d="M4 12c2-2 1-5 5-8 0 3 3 4 2 8l-2-3-2 3z" fill="#fff" stroke="none" /><circle cx="12.500" cy="12.500" r="3.500" fill="#22c063" stroke="none" /><path d="M10.500 12.500h4" stroke="#fff" strokeWidth="1.500" /></>],
  ['助手', <circle cx="8" cy="8" r="8" fill="#4caf50" stroke="none" />],
  ['钉钉', <><circle cx="8" cy="8" r="8" fill="#3296fa" stroke="none" /><path d="M4 3l8 4-2 5-2 1 .5-2H7L4 6z" fill="#fff" stroke="none" /></>],
  ['管家', <><circle cx="8" cy="8" r="8" fill="#2196e3" stroke="none" /><path d="M13 3C4 2 3 12 8 12c4 0 4-5 0-3.500" stroke="#fff" strokeWidth="2" /></>],
  ['云盘', <path d="M0 8h8V4h8v8H8v3z" fill="#1677ff" stroke="none" />],
  ['WPS', <path d="M1.500 3l3 10L8 5l3.500 8 3-10M1 3h14" stroke="#e4392b" strokeWidth="2.200" />],
  ['微信', <><ellipse cx="6" cy="6" rx="6" ry="5" fill="#2dc96a" stroke="none" /><ellipse cx="11.500" cy="11" rx="4.500" ry="3.800" fill="#dedede" stroke="none" /><path d="M4 5h.8M7.500 5h.8M10 10.500h.8M12.500 10.500h.8" stroke="#333" /></>],
];

const Close = () => <Svg $size={8} viewBox="0 0 8 8"><path d="M1 1l6 6M7 1L1 7" /></Svg>;
const TickMark = styled(Svg)<{ $c: string }>`stroke: ${p => p.$c};`;
const Tick = ({ c }: { c: string }) => <TickMark $c={c} $size={10} viewBox="0 0 10 10"><path d="M1.500 5l2.500 3L9 2" /></TickMark>;

export default function App() {
  return (
    <Shell>
      <GlobalStyle />
      <Header>
        <LogoButton aria-label="应用菜单">
          <Svg viewBox="0 0 32 32">
            <defs><linearGradient id="lg" x1="0" y1="0" x2="1" y2="1"><stop offset="0" stopColor="#22c8f5" /><stop offset=".5" stopColor="#0d8df5" /><stop offset="1" stopColor="#1666e0" /></linearGradient></defs>
            <path d="M1 0C9 2 20 1 27 0c2 0 2 2 1 4-1 3-4 4-8 4l-2 3c0 5 1 8 1 12 0 6-8 6-9 1 0-5 1-9 1-13 0-2 0-3-2-4C4 6 0 5 0 1z" fill="url(#lg)" stroke="none" />
            <path d="M12 12c1 5 5 7 5 13" stroke="#5fe0fa" strokeWidth="2" />
            <path d="M32 27v4h-4z" fill="#666" stroke="none" />
          </Svg>
        </LogoButton>
        <div>
          <TitleRow>
            <QuickBar>
              {quick.map(i => (
                <button key={i} aria-label={i}>
                  <Svg viewBox="0 0 16 16">{smallArt[i]}</Svg>
                  {(i === 'undo' || i === 'redo') && <Caret $c="#bbb" />}
                </button>
              ))}
              <Caret $c="#444" />
            </QuickBar>
            <Title>广联达BIM土建计量平台 GTJ2021 - [D:\桌面资料\粟粟粟粟---工作文件\天健国际物联网孵化器图纸（新）\天健国际物联网孵化园(导出).GTJ]</Title>
          </TitleRow>
          <TabRow>
            {tabs.map(t => (
              <Tab key={t} $active={t === '工程量'}>{t}{t === '施工算量' && <NewBadge>NEW</NewBadge>}</Tab>
            ))}
            <HelpInput aria-label="帮助搜索" defaultValue="土建计量GTJ中，图纸管理中都有哪些功能？" />
          </TabRow>
        </div>
      </Header>
      <Meter />

      <Ribbon>
        <Group $width={232}>
          <GroupBody>
            <BigButton><Svg $size={32} viewBox="0 0 32 32">{bigArt.cursor}</Svg>选择</BigButton>
            <SmallGrid>
              {smallItems.map(s => (
                <SmallButton key={s.t} disabled={s.off}>
                  <Svg viewBox="0 0 16 16">{smallArt[s.i]}</Svg>{s.t}{s.caret && <Caret />}
                </SmallButton>
              ))}
            </SmallGrid>
          </GroupBody>
          <GroupLabel>选择</GroupLabel>
        </Group>
        {groups.map(g => (
          <Group key={g.label} $width={g.width}>
            <GroupBody>
              {g.items.map(b => (
                <BigButton key={b.t} disabled={b.off} $on={b.on}>
                  <Svg $size={32} viewBox="0 0 32 32">{bigArt[b.i]}</Svg>{b.t}
                </BigButton>
              ))}
            </GroupBody>
            <GroupLabel>{g.label}</GroupLabel>
          </Group>
        ))}
      </Ribbon>

      <SelectRow>
        {['第4层', '施工段', '主体结构', '屋面抗渗砼'].map(s => (
          <SelectBox key={s}><select aria-label={s}><option>{s}</option></select><Caret $c="#444" /></SelectBox>
        ))}
      </SelectRow>

      <Main>
        <Column $width={211}>
          <Panel>
            <Grip><Close /></Grip>
            <PanelTitle>导航栏</PanelTitle>
            <NavTools>
              <button aria-label="添加"><Svg viewBox="0 0 16 16">{smallArt.plus}</Svg></button>
              <Spacer />
              <ToggleButton aria-label="列表"><Svg viewBox="0 0 16 16">{smallArt.list}</Svg></ToggleButton>
              <ToggleButton aria-label="卡片"><Svg viewBox="0 0 16 16">{smallArt.card}</Svg></ToggleButton>
            </NavTools>
            <TreeArea>
              <ul>
                {tree.map(b => (
                  <React.Fragment key={b.t}>
                    <TreeItem><Branch><Caret $dir={b.open ? 'down' : 'right'} />{b.t}</Branch></TreeItem>
                    {b.items?.map(([t, i]) => (
                      <TreeItem key={t}><Leaf $on={t === '主体结构'}><Svg viewBox="0 0 16 16">{navArt[i]}</Svg>{t}</Leaf></TreeItem>
                    ))}
                  </React.Fragment>
                ))}
              </ul>
              <ScrollThumb />
            </TreeArea>
          </Panel>
        </Column>

        <Column $width={276}>
          <Panel $height={326}>
            <Grip><Close /></Grip>
            <PanelTabs><PanelTab $active>构件列表</PanelTab><PanelTab>图纸管理</PanelTab></PanelTabs>
            <ToolRow>
              <ToolButton><Svg viewBox="0 0 16 16">{smallArt.newFile}</Svg>新建<Caret /></ToolButton>
              <ToolButton><Svg viewBox="0 0 16 16">{smallArt.copy}</Svg>复制</ToolButton>
              <ToolButton><Svg viewBox="0 0 16 16">{smallArt.remove}</Svg>删除</ToolButton>
              <ToolButton><Svg viewBox="0 0 16 16">{smallArt.layerCopy}</Svg>层间复制</ToolButton>
              <MoreButton aria-label="更多"><Svg $size={8} viewBox="0 0 8 8"><path d="M0 1l3.500 3L0 7zM4.500 1L8 4 4.500 7z" fill="#444" stroke="none" /></Svg></MoreButton>
            </ToolRow>
            <SearchRow>
              <input aria-label="搜索构件" placeholder="搜索构件..." />
              <Svg $size={10} viewBox="0 0 10 10"><circle cx="4.500" cy="4.500" r="4" /><path d="M7.500 7.500L10 10" /></Svg>
            </SearchRow>
            <TreeArea as="ul">
              <TreeItem><Branch $indent={13}><Caret />主体结构</Branch></TreeItem>
              <TreeItem><Chip>屋面抗渗砼</Chip></TreeItem>
            </TreeArea>
          </Panel>
          <Panel>
            <Grip><Close /></Grip>
            <PanelTabs><PanelTab $active>属性列表</PanelTab><PanelTab>图层管理</PanelTab></PanelTabs>
            <PropArea>
              <PropTable>
                <colgroup><col width="22" /><col width="101" /><col /></colgroup>
                <thead><tr><th /><th>属性名称</th><th>属性值</th></tr></thead>
                <tbody>
                  {props.map(([n, v, link], i) => (
                    <tr key={n}>
                      <th scope="row">{i + 1}</th>
                      <td>{n === '显示样式' && <Expand aria-label="展开">+</Expand>}<PropName $link={link}>{n}</PropName></td>
                      <td>{v}</td>
                    </tr>
                  ))}
                </tbody>
              </PropTable>
            </PropArea>
          </Panel>
        </Column>
        <Splitter><Caret /></Splitter>

        <Viewport>
          <Plan />
          <Dialog aria-label="查看施工段工程量">
            <DialogTitle>查看施工段工程量</DialogTitle>
            <Frame>
              <Options>
                <Option><input type="radio" name="kind" defaultChecked />清单工程量</Option>
                <Option><input type="radio" name="kind" />定额工程量</Option>
                <Option><CheckWrap><input type="checkbox" defaultChecked /><Tick c="#fff" /></CheckWrap>显示房间、组合构件量</Option>
                <Option $off><CheckWrap><input type="checkbox" defaultChecked disabled /><Tick c="#999" /></CheckWrap>只显示标准层单层量</Option>
              </Options>
              <QtyTable>
                <thead>
                  <tr>
                    <th rowSpan={2}>施工段名称</th><th rowSpan={2}>混凝土强度<br />等级</th><th rowSpan={2}>构件类型</th><th rowSpan={2}>名称</th><th colSpan={2}>工程量名称</th>
                  </tr>
                  <tr><th>体积(m3)</th><th>模板面积(m2)</th></tr>
                </thead>
              </QtyTable>
            </Frame>
            <Sash />
            <Frame><Detail /></Frame>
            <ExportButton>导出到Excel</ExportButton>
          </Dialog>
        </Viewport>
      </Main>

      <Status>
        <StatusBit $w={22} /><StatusBit $w={33} $c="#2f7fe6" /><StatusBit $w={22} $c="#bbb" /><StatusBit $w={33} /><StatusBit $w={33} /><StatusBit $w={22} /><StatusBit $w={22} />
      </Status>

      <Tray>
        <TrayTop>
          {trayArt.map(([n, a]) => <button key={n} aria-label={n}><Svg viewBox="0 0 16 16">{a}</Svg></button>)}
        </TrayTop>
        <TrayFoot><a href="#tray">自定义...</a></TrayFoot>
      </Tray>
    </Shell>
  );
}
